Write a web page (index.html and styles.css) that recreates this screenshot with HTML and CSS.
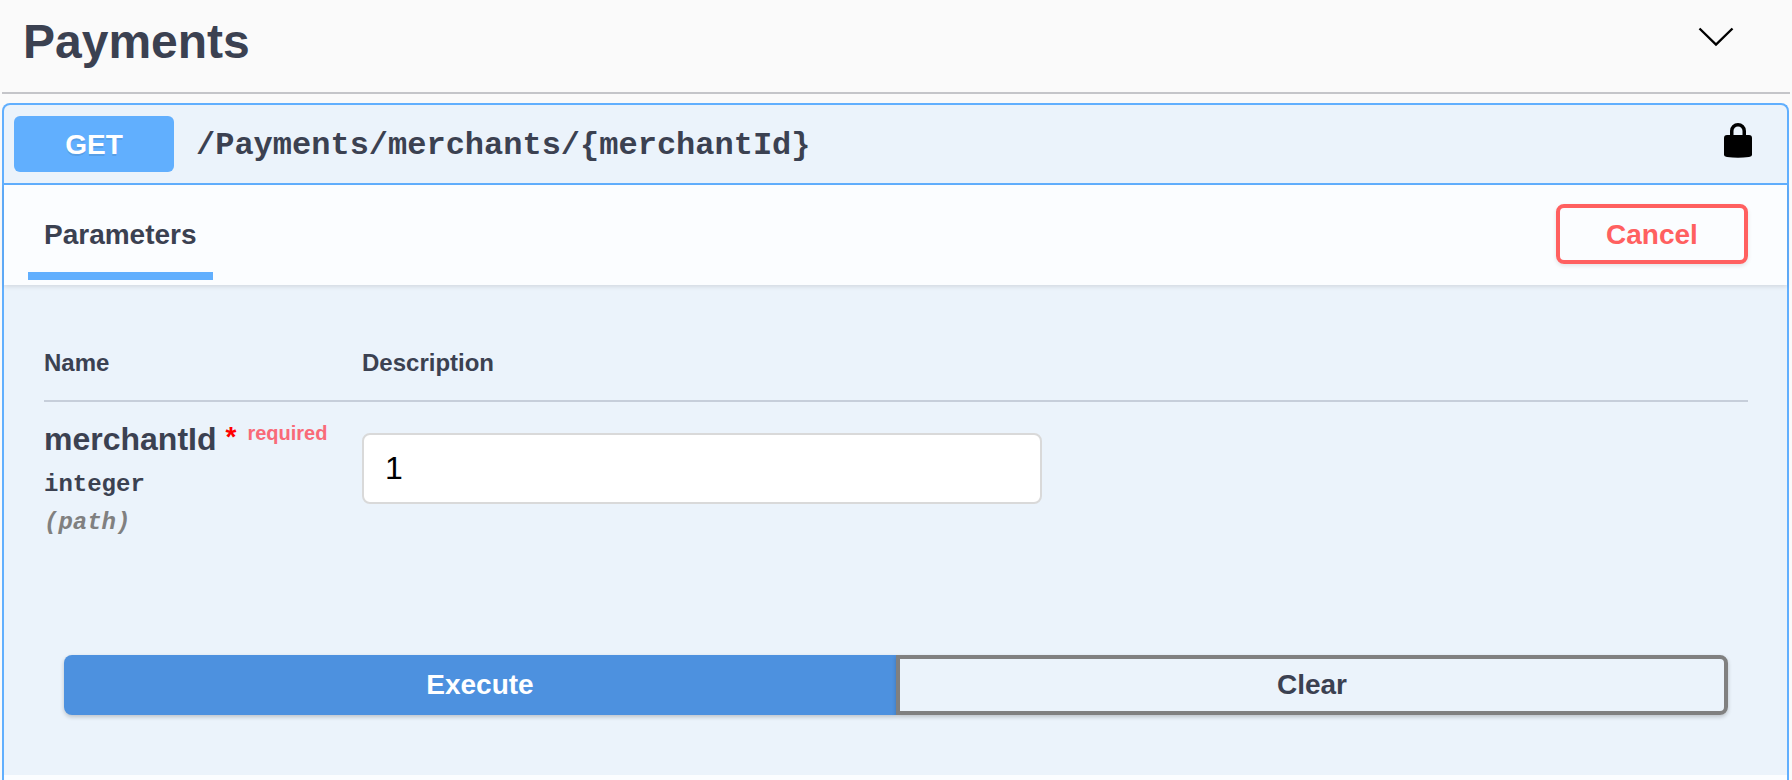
FILE: index.html
```html
<!DOCTYPE html>
<html lang="en">
<head>
    <meta charset="UTF-8">
    <title>Payments</title>
    <link rel="stylesheet" href="styles.css">
</head>
<body>

    <div class="tagHeader">
        <h3 class="tagName">Payments</h3>
        <svg class="arrow" width="36" height="20" viewBox="0 0 36 20">
            <path d="M1.5 1.5 L18 17.5 L34.5 1.5" fill="none" stroke="#000" stroke-width="2.4"/>
        </svg>
    </div>

    <div class="opblock">
        <div class="summary">
            <span class="method">GET</span>
            <span class="path">/Payments/merchants/{merchantId}</span>
            <svg class="lock" width="28" height="36" viewBox="0 0 28 36">
                <path d="M6 14 V9 a8 8 0 0 1 16 0 V14 H18.5 V9 a4.5 4.5 0 0 0 -9 0 V14 Z M3 13 H25 Q28 13 28 16 V33 Q28 34.500 25 35 Q14 36.500 3 35 Q0 34.500 0 33 V16 Q0 13 3 13 Z" fill="#000"/>
            </svg>
        </div>

        <div class="tabHeader">
            <div class="tab">Parameters</div>
            <button class="cancel">Cancel</button>
        </div>

        <div class="params">
            <div class="paramRow paramHead">
                <div>Name</div>
                <div>Description</div>
            </div>
            <div class="paramRow">
                <div>
                    <div class="paramName">merchantId<span class="star">*</span><span class="required">required</span></div>
                    <div class="paramType">integer</div>
                    <div class="paramIn">(path)</div>
                </div>
                <div>
                    <input class="paramInput" type="text" value="1">
                </div>
            </div>
        </div>

        <div class="actions">
            <button class="btn execute">Execute</button>
            <button class="btn clear">Clear</button>
        </div>

        <div class="bodyEnd"></div>
    </div>

</body>
</html>
```

FILE: styles.css
```css
html {
    margin: 0;
    padding: 0;
}

body {
    margin: 0;
    padding: 0;
    height: 780px;
    overflow: hidden;
    background: #fafafa;
    color: #3b4151;
    font-family: "Liberation Sans", Arial, sans-serif;
}

.tagHeader {
    display: flex;
    align-items: center;
    justify-content: space-between;
    box-sizing: border-box;
    height: 94px;
    margin: 0 2px;
    padding: 0 56px 8px 21px;
    border-bottom: 2px solid #c4c5c9;
}

.tagName {
    margin: 0;
    font-size: 48px;
    line-height: 60px;
    font-weight: bold;
}

.arrow {
    margin-bottom: 10px;
}

.opblock {
    margin: 9px 3px 0 2px;
    border: 2px solid #61affe;
    border-bottom: 0;
    border-radius: 8px 8px 0 0;
    background: #ebf3fb;
}

.summary {
    display: flex;
    align-items: center;
    box-sizing: border-box;
    height: 80px;
    padding: 0 11px 0 10px;
    border-bottom: 2px solid #61affe;
}

.method {
    width: 160px;
    height: 56px;
    border-radius: 6px;
    background: #61affe;
    color: #fff;
    font-size: 28px;
    font-weight: bold;
    line-height: 58px;
    text-align: center;
    text-shadow: 0 2px 0 rgba(0, 0, 0, .1);
}

.path {
    flex: 1;
    margin: 2px 0 0 22px;
    font-family: "Liberation Mono", "Courier New", monospace;
    font-size: 32px;
    font-weight: bold;
}

.lock {
    display: block;
    margin: 0 24px 8px 0;
}

.tabHeader {
    display: flex;
    justify-content: space-between;
    box-sizing: border-box;
    height: 100px;
    padding: 19px 39px 0 24px;
    background: #fbfdff;
    box-shadow: 0 2px 4px rgba(0, 0, 0, .1);
}

.tab {
    box-sizing: border-box;
    width: 185px;
    height: 76px;
    padding: 13px 0 0 16px;
    border-bottom: 8px solid #61affe;
    font-size: 28px;
    font-weight: bold;
    line-height: 36px;
}

.cancel {
    box-sizing: border-box;
    width: 192px;
    height: 60px;
    padding: 2px 0 0;
    border: 4px solid #ff6060;
    border-radius: 8px;
    background: transparent;
    color: #ff6060;
    font-family: inherit;
    font-size: 28px;
    font-weight: bold;
    box-shadow: 0 2px 4px rgba(0, 0, 0, .1);
}

.params {
    height: 370px;
    padding: 0 39px 0 40px;
}

.paramRow {
    display: grid;
    grid-template-columns: 318px 1fr;
}

.paramHead {
    box-sizing: border-box;
    height: 117px;
    padding-top: 62px;
    border-bottom: 2px solid #c6ceda;
    font-size: 24px;
    font-weight: bold;
    line-height: 32px;
}

.paramName {
    margin-top: 11px;
    font-size: 32px;
    font-weight: bold;
    line-height: 40px;
    white-space: nowrap;
}

.star {
    margin-left: 9px;
    color: #f00;
    font-size: 28px;
    vertical-align: 4px;
}

.required {
    margin-left: 11px;
    color: #f96a78;
    font-size: 20px;
    vertical-align: 10px;
}

.paramType {
    margin-top: 9px;
    font-family: "Liberation Mono", "Courier New", monospace;
    font-size: 24px;
    font-weight: bold;
    line-height: 34px;
}

.paramIn {
    margin-top: 4px;
    color: #808080;
    font-family: "Liberation Mono", "Courier New", monospace;
    font-size: 24px;
    font-style: italic;
    font-weight: bold;
    line-height: 34px;
}

.paramInput {
    display: block;
    box-sizing: border-box;
    width: 680px;
    height: 71px;
    margin-top: 31px;
    padding: 0 21px;
    border: 2px solid #d9d9d9;
    border-radius: 8px;
    background: #fff;
    color: #000;
    font-family: "Liberation Sans", Arial, sans-serif;
    font-size: 32px;
    outline: none;
}

.actions {
    display: flex;
    height: 120px;
    padding: 0 59px 0 60px;
}

.btn {
    box-sizing: border-box;
    width: 832px;
    height: 60px;
    padding: 0;
    font-family: inherit;
    font-size: 28px;
    font-weight: bold;
    box-shadow: 0 2px 4px rgba(0, 0, 0, .2);
}

.execute {
    border: 0;
    border-radius: 8px 0 0 8px;
    background: #4d91df;
    color: #fff;
}

.clear {
    border: 4px solid #808080;
    border-radius: 0 8px 8px 0;
    background: transparent;
    color: #3b4151;
}

.bodyEnd {
    height: 20px;
    background: #fbfdff;
}
```
